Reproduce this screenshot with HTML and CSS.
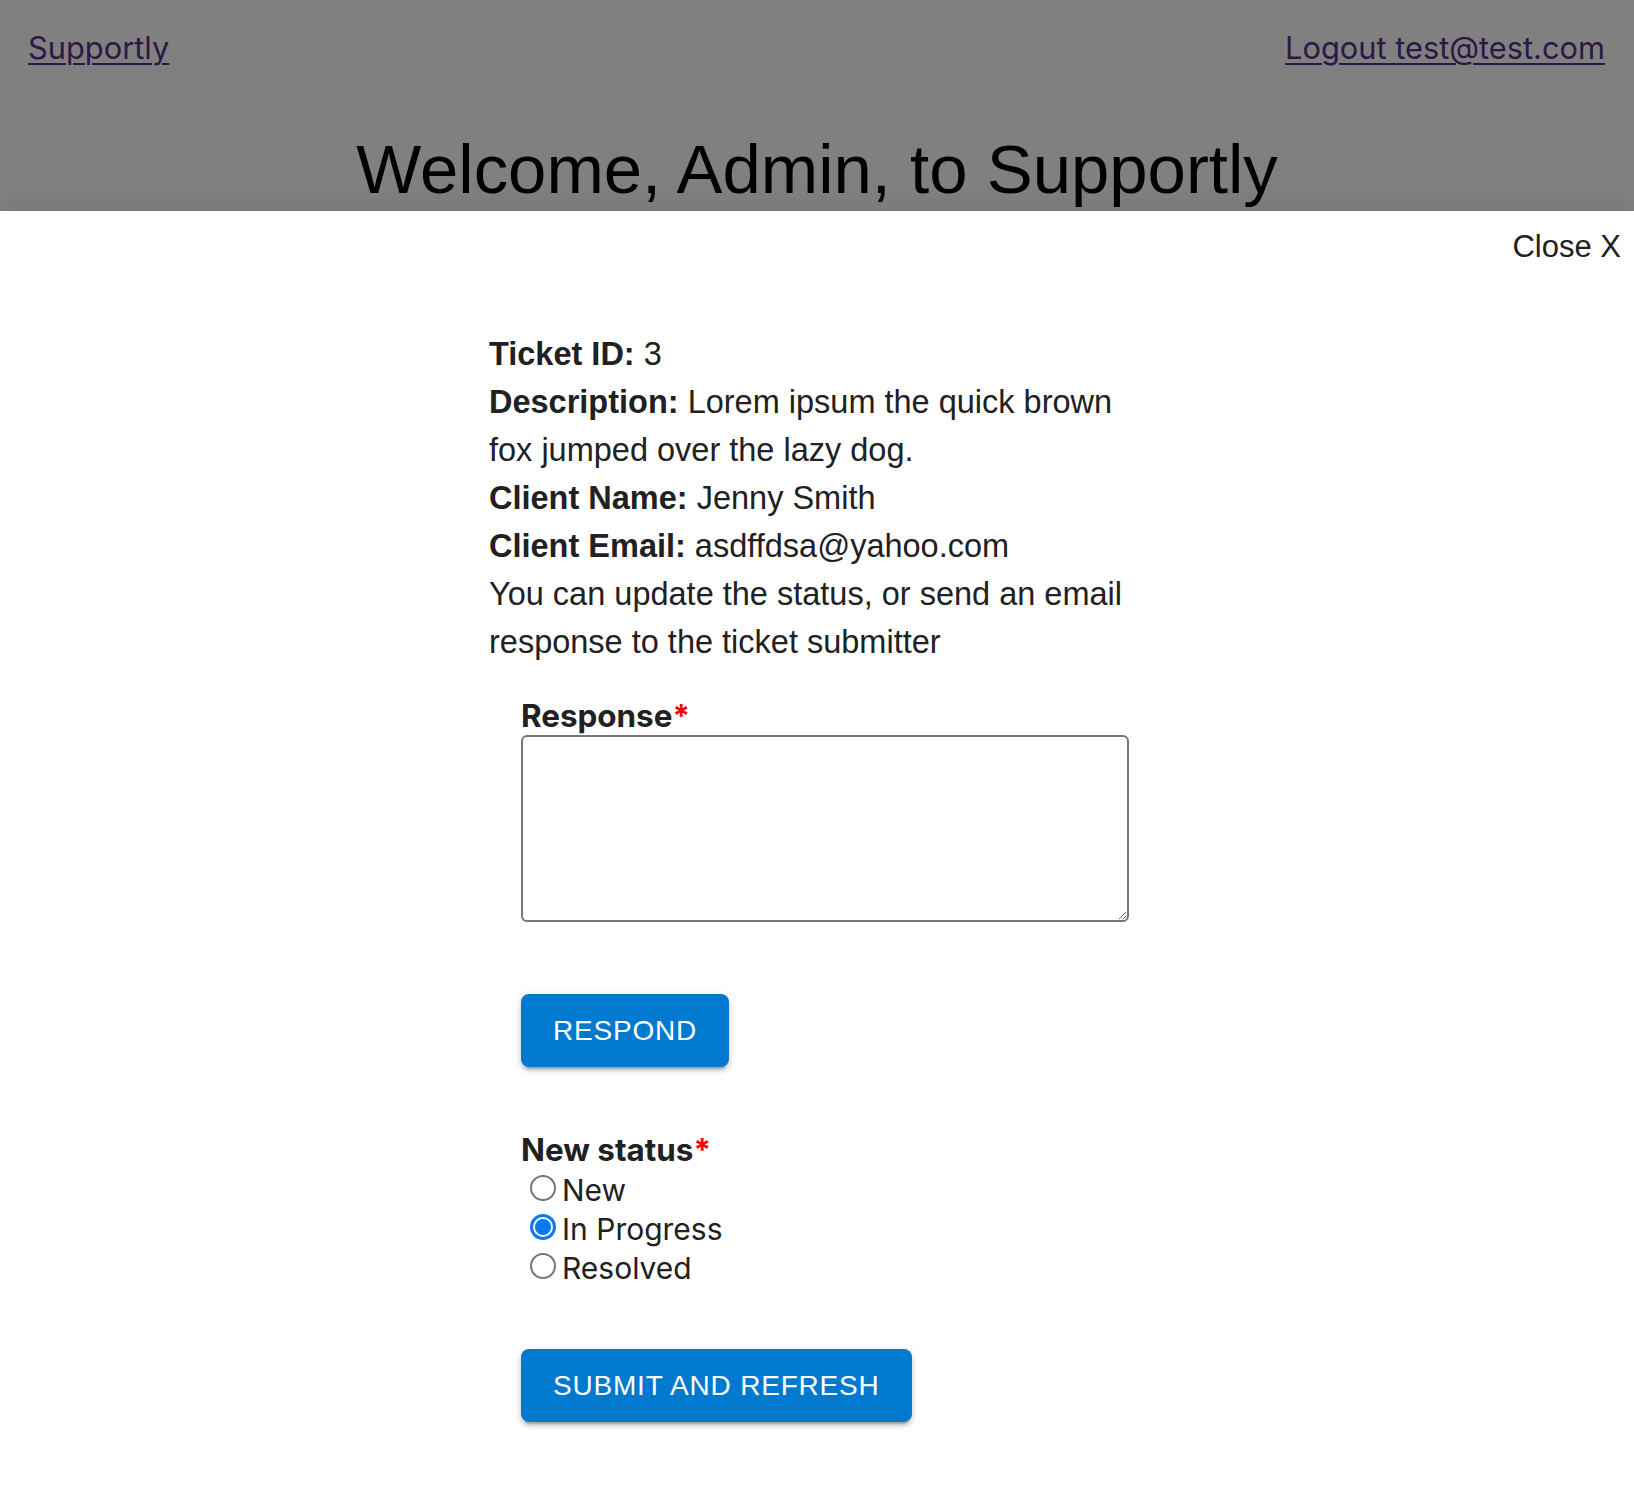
FILE: index.html
```html
<!DOCTYPE html>
<html lang="en">
<head>
<meta charset="utf-8">
<title>Supportly</title>
<link rel="stylesheet" href="styles.css">
</head>
<body>
  <header class="topbar">
    <nav class="nav">
      <a class="nav-link" href="#">Supportly</a>
      <a class="nav-link" href="#">Logout test@test.com</a>
    </nav>
    <h1 class="welcome">Welcome, Admin, to Supportly</h1>
  </header>
  <main class="panel">
    <div class="close-row"><span class="close">Close X</span></div>
    <section class="ticket">
      <p class="info"><b>Ticket ID:</b> 3</p>
      <p class="info"><b>Description:</b> Lorem ipsum the quick brown fox jumped over the lazy dog.</p>
      <p class="info"><b>Client Name:</b> Jenny Smith</p>
      <p class="info"><b>Client Email:</b> asdffdsa@yahoo.com</p>
      <p class="info">You can update the status, or send an email response to the ticket submitter</p>
      <form class="respond-form">
        <label class="field-label first" for="response">Response<span class="req">*</span></label>
        <textarea id="response" class="response-box"></textarea>
        <button type="button" class="btn btn-respond">Respond</button>
        <div class="field-label status-label">New status<span class="req">*</span></div>
        <div class="radio-group">
          <label class="radio-row"><input type="radio" name="status" class="radio">New</label>
          <label class="radio-row"><input type="radio" name="status" class="radio" checked>In Progress</label>
          <label class="radio-row"><input type="radio" name="status" class="radio">Resolved</label>
        </div>
        <button type="button" class="btn btn-submit">Submit and refresh</button>
      </form>
    </section>
  </main>
</body>
</html>
```

FILE: styles.css
```css
html, body {
  margin: 0;
  padding: 0;
  background: #ffffff;
}

body {
  min-height: 1498px;
  display: flex;
  flex-direction: column;
  font-family: "Liberation Sans", Arial, sans-serif;
  color: #212121;
}

.topbar {
  height: 211px;
  background: #808080;
  overflow: hidden;
  flex: none;
}

.nav {
  display: flex;
  justify-content: space-between;
  padding: 29px 29px 0 28px;
  line-height: 38px;
}

.nav-link {
  font-family: Inter, "Noto Sans", sans-serif;
  font-size: 30.8px;
  color: #2d1747;
  text-decoration: underline;
  text-decoration-thickness: 2px;
  text-underline-offset: 4px;
}

.welcome {
  margin: 63px 0 0 0;
  text-align: center;
  font-family: "Liberation Sans", Arial, sans-serif;
  font-weight: normal;
  font-size: 68.9px;
  line-height: 80px;
  color: #000000;
}

.panel {
  flex: 1;
  background: #ffffff;
  box-shadow: 0 -6px 24px rgba(0, 0, 0, 0.07);
}

.close-row {
  padding: 12px 13px 0 0;
  text-align: right;
  font-size: 31px;
  line-height: 48px;
  color: #212121;
}

.ticket {
  width: 656px;
  margin: 59px auto 0 auto;
  padding-bottom: 60px;
}

.info {
  margin: 0;
  font-size: 32.5px;
  line-height: 48px;
}

.info b {
  font-weight: bold;
}

.respond-form {
  padding-left: 32px;
}

.field-label {
  display: block;
  font-family: Inter, "Noto Sans", sans-serif;
  font-weight: 700;
  font-size: 31.4px;
  line-height: 36px;
  color: #212121;
}

.field-label.first {
  margin-top: 32px;
}

.req {
  color: #ff0000;
}

.response-box {
  display: block;
  box-sizing: border-box;
  width: 608px;
  height: 187px;
  margin: 1px 0 0 0;
  border: 2px solid #767676;
  border-radius: 6px;
  background: #ffffff;
  font-size: 26px;
}

.btn {
  display: block;
  box-sizing: border-box;
  height: 73px;
  padding: 12px 32px;
  border: none;
  border-radius: 8px;
  background: #0179cf;
  color: #ffffff;
  font-family: "Liberation Sans", Arial, sans-serif;
  font-size: 28px;
  line-height: 49px;
  letter-spacing: 0.8px;
  text-transform: uppercase;
  box-shadow: 0 6px 2px -4px rgba(0, 0, 0, 0.2), 0 4px 4px 0 rgba(0, 0, 0, 0.14), 0 2px 10px 0 rgba(0, 0, 0, 0.12);
  cursor: pointer;
}

.btn-respond {
  margin-top: 72px;
}

.status-label {
  margin-top: 65px;
}

.radio-group {
  margin-top: 3px;
}

.radio-row {
  display: block;
  font-family: Inter, "Noto Sans", sans-serif;
  font-size: 30px;
  line-height: 39px;
  color: #212121;
}

.radio {
  -webkit-appearance: none;
  appearance: none;
  box-sizing: border-box;
  width: 26px;
  height: 26px;
  margin: 0 6px 0 9px;
  border: 2px solid #767676;
  border-radius: 50%;
  background: #ffffff;
  vertical-align: baseline;
}

.radio:checked {
  border: 3px solid #0b79f5;
  background: radial-gradient(circle, #0b79f5 0 7.5px, #ffffff 8.5px);
}

.btn-submit {
  margin-top: 61px;
}
```
